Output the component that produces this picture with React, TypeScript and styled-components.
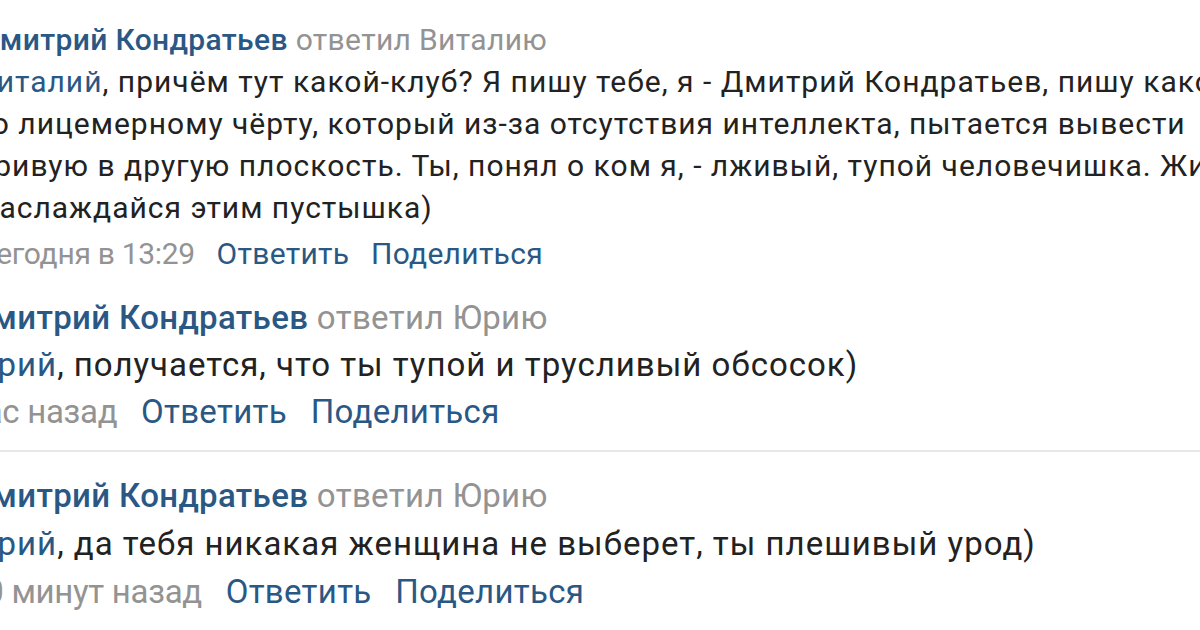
import { createGlobalStyle } from 'styled-components';
import styled from 'styled-components';

const GlobalStyle = createGlobalStyle`
  html, body {
    margin: 0;
    padding: 0;
    background: #ffffff;
  }
  body {
    font-family: Roboto, "Open Sans", "DejaVu Sans", sans-serif;
    -webkit-font-smoothing: antialiased;
  }
`;

const Page = styled.div`
  width: 1200px;
  height: 630px;
  overflow: hidden;
  background: #ffffff;
  display: flex;
  flex-direction: column;
`;

// the screenshot is cropped on the left, so every reply is pulled out past the edge
const Comment = styled.div<{ $size: number; $lh: number; $shift: number; $top: number }>`
  display: flex;
  flex-direction: column;
  margin-left: ${({ $shift }) => -$shift}px;
  margin-top: ${({ $top }) => $top}px;
  font-size: ${({ $size }) => $size}px;
  line-height: ${({ $lh }) => $lh}px;
  white-space: nowrap;
`;

const Header = styled.div`
  display: flex;
  gap: 0.26em;
  letter-spacing: 0.35px;
`;

const Author = styled.span`
  color: #2a5885;
  font-weight: 500;
`;

const Muted = styled.span`
  color: #939393;
`;

const Body = styled.div`
  display: flex;
  flex-direction: column;
  color: #222222;
  letter-spacing: 1px;
`;

const Mention = styled.span`
  color: #2a5885;
`;

const Footer = styled.div<{ $gap: number }>`
  display: flex;
  gap: 0.72em;
  margin-top: ${({ $gap }) => $gap}px;
  letter-spacing: 0.3px;
`;

const Date = styled.span`
  color: #939393;
  letter-spacing: -0.3px;
`;

const Action = styled.span`
  color: #2a5885;
`;

const Divider = styled.hr`
  border: none;
  height: 2px;
  background: #e7e8ec;
  margin: 15px 0 0;
  width: 100%;
`;

interface Reply {
  to: string;
  mention: string;
  lines: string[];
  date: string;
}

const replies: Reply[] = [
  {
    to: 'Виталию',
    mention: 'Виталий',
    lines: [
      ', причём тут какой-клуб? Я пишу тебе, я - Дмитрий Кондратьев, пишу какому-',
      'то лицемерному чёрту, который из-за отсутствия интеллекта, пытается вывести',
      'кривую в другую плоскость. Ты, понял о ком я, - лживый, тупой человечишка. Живи',
      'Наслаждайся этим пустышка)',
    ],
    date: 'Сегодня в 13:29',
  },
  {
    to: 'Юрию',
    mention: 'Юрий',
    lines: [', получается, что ты тупой и трусливый обсосок)'],
    date: 'час назад',
  },
  {
    to: 'Юрию',
    mention: 'Юрий',
    lines: [', да тебя никакая женщина не выберет, ты плешивый урод)'],
    date: '50 минут назад',
  },
];

const layout = [
  { size: 30, lh: 42, shift: 23, top: 19, footer: 4 },
  { size: 33, lh: 47, shift: 33, top: 19, footer: 0 },
  { size: 33, lh: 48, shift: 33, top: 20, footer: 0 },
];

const ReplyItem = ({ reply, index }: { reply: Reply; index: number }) => {
  const l = layout[index];
  return (
    <Comment $size={l.size} $lh={l.lh} $shift={l.shift} $top={l.top}>
      <Header>
        <Author>Дмитрий Кондратьев</Author>
        <Muted>ответил {reply.to}</Muted>
      </Header>
      <Body>
        {reply.lines.map((line, i) => (
          <span key={i}>
            {i === 0 && <Mention>{reply.mention}</Mention>}
            {line}
          </span>
        ))}
      </Body>
      <Footer $gap={l.footer}>
        <Date>{reply.date}</Date>
        <Action>Ответить</Action>
        <Action>Поделиться</Action>
      </Footer>
    </Comment>
  );
};

export default function App() {
  return (
    <>
      <GlobalStyle />
      <Page>
        <ReplyItem reply={replies[0]} index={0} />
        <ReplyItem reply={replies[1]} index={1} />
        <Divider />
        <ReplyItem reply={replies[2]} index={2} />
      </Page>
    </>
  );
}
